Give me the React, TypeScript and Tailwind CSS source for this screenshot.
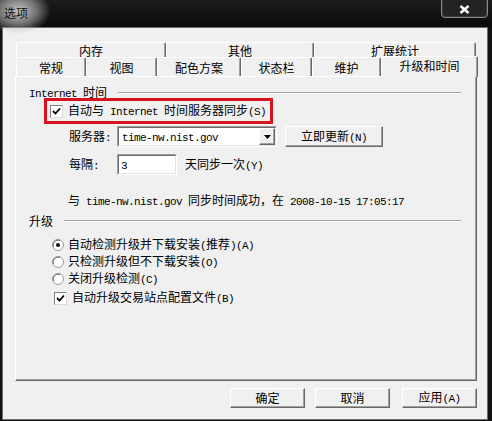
import React from 'react';

const cjk = "font-['Noto_Sans_CJK_SC',sans-serif]";

function M({ children }: { children: React.ReactNode }) {
  return <span className="font-['Liberation_Mono',monospace] text-[11px] tracking-[-0.6px] whitespace-pre">{children}</span>;
}

function CheckBox() {
  return (
    <div className="w-[13px] h-[13px] shrink-0 border border-t-[#808080] border-l-[#808080] border-r-[#dcdcdc] border-b-[#dcdcdc] bg-white flex items-center justify-center">
      <svg width="9" height="9" viewBox="0 0 9 9">
        <path d="M1 4 L3.5 6.5 L8 1.5" fill="none" stroke="#000" strokeWidth="1.8" />
      </svg>
    </div>
  );
}

function Radio({ checked }: { checked?: boolean }) {
  return (
    <svg width="12" height="12" viewBox="0 0 12 12" className="shrink-0">
      <circle cx="6" cy="6" r="5.5" fill="#fff" stroke="#9a9a9a" />
      <path d="M1.5 8 A5 5 0 0 1 8 1.5" fill="none" stroke="#6e6e6e" />
      {checked && <circle cx="6" cy="6" r="2" fill="#111" />}
    </svg>
  );
}

function Raised({ className, children }: { className: string; children: React.ReactNode }) {
  return (
    <div
      className={`flex items-center justify-center bg-[#f0f0f0] border border-t-white border-l-white border-r-[#696969] border-b-[#696969] shadow-[inset_-1px_-1px_0_#a0a0a0] ${className}`}
    >
      {children}
    </div>
  );
}

function Sunken({ className, children }: { className: string; children: React.ReactNode }) {
  return (
    <div className={`border border-t-[#a0a0a0] border-l-[#a0a0a0] border-r-white border-b-white ${className}`}>
      <div className="h-full flex items-center border border-t-[#696969] border-l-[#696969] border-r-[#e3e3e3] border-b-[#e3e3e3] bg-white">
        {children}
      </div>
    </div>
  );
}

function Tab({ w, children }: { w: string; children: React.ReactNode }) {
  return (
    <div
      className={`h-full flex justify-center pt-[1px] rounded-t-[2px] border-t border-l border-r border-t-white border-l-white border-r-[#696969] shadow-[inset_-1px_0_0_#a0a0a0] ${w}`}
    >
      {children}
    </div>
  );
}

function Group({ label }: { label: React.ReactNode }) {
  return (
    <div className="flex items-center h-[12px] pl-[13px] pr-[15px]">
      <span className="leading-[12px]">{label}</span>
      <div className="flex-1 ml-[11px] border-t border-b border-t-[#a0a0a0] border-b-white" />
    </div>
  );
}

export default function App() {
  return (
    <div className={`w-[492px] h-[421px] bg-[#111] overflow-hidden text-[12px] text-black ${cjk}`}>
      {/* title bar */}
      <div className="relative h-[27px] bg-gradient-to-b from-[#1c1c1c] to-[#0a0a0a]">
        <div className="absolute left-[-14px] top-[-12px] w-[64px] h-[46px] bg-[radial-gradient(ellipse_at_center,rgba(215,215,215,0.9)_0%,rgba(180,180,180,0.6)_40%,transparent_72%)]" />
        <span className="absolute left-[4px] top-[5px] text-[12px] leading-[16px] text-[#111]">选项</span>
        <div className="absolute left-[441px] top-[-3px] w-[47px] h-[21px] rounded-b-[4px] border border-[#8a8a8a] bg-[#232323] shadow-[inset_0_0_0_1px_#3a3a3a] flex items-center justify-center pt-[3px]">
          <svg width="11" height="9" viewBox="0 0 11 9">
            <path d="M1.5 1 L9.5 8 M9.5 1 L1.5 8" stroke="#fff" strokeWidth="2.4" />
          </svg>
        </div>
      </div>

      {/* client */}
      <div className="ml-[2px] w-[486px] h-[393px] border border-[#6d6d6d] bg-[#f0f0f0] flex flex-col">
        {/* tabs */}
        <div className="ml-[13px] mt-[14px] w-[462px] leading-[14px]">
          <div className="flex h-[15px]">
            <Tab w="w-[150px]">内存</Tab>
            <Tab w="w-[148px]">其他</Tab>
            <Tab w="w-[162px]">扩展统计</Tab>
          </div>
          <div className="flex h-[19px] items-end">
            <Tab w="w-[70px]"><span className="pt-[2px]">常规</span></Tab>
            <Tab w="w-[71px]"><span className="pt-[2px]">视图</span></Tab>
            <Tab w="w-[84px]"><span className="pt-[2px]">配色方案</span></Tab>
            <Tab w="w-[71px]"><span className="pt-[2px]">状态栏</span></Tab>
            <Tab w="w-[69px]"><span className="pt-[2px]">维护</span></Tab>
            <div className="relative z-10 -mb-[1px] h-[21px] w-[97px] flex justify-center pt-[2px] rounded-t-[2px] bg-[#f0f0f0] border-t border-l border-r border-t-white border-l-white border-r-[#696969] shadow-[inset_-1px_0_0_#a0a0a0]">
              升级和时间
            </div>
          </div>
        </div>

        {/* panel */}
        <div className="ml-[12px] w-[462px] h-[305px] border border-t-white border-l-white border-r-[#696969] border-b-[#696969] shadow-[inset_-1px_-1px_0_#a0a0a0] flex flex-col">
          <div className="mt-[10px]">
            <Group label={<><M>Internet </M>时间</>} />
          </div>

          <div className="mt-[-1px] ml-[28px] w-[229px] h-[26px] border-[3px] border-[#d7141d] flex items-center pl-[3px]">
            <CheckBox />
            <span className="ml-[5px] leading-[14px]">
              自动与<M> Internet </M>时间服务器同步<M>(S)</M>
            </span>
          </div>

          <div className="mt-[2px] ml-[53px] flex items-center h-[21px]">
            <span className="w-[48px]">服务器<M>:</M></span>
            <Sunken className="w-[160px] h-[21px]">
              <span className="flex-1 pl-[3px] leading-[14px]"><M>time-nw.nist.gov</M></span>
              <Raised className="w-[16px] h-[17px]">
                <svg width="7" height="4" viewBox="0 0 7 4"><path d="M0 0 H7 L3.5 4 Z" fill="#000" /></svg>
              </Raised>
            </Sunken>
            <Raised className="ml-[8px] w-[98px] h-[21px]">
              <span className="leading-[14px]">立即更新<M>(N)</M></span>
            </Raised>
          </div>

          <div className="mt-[7px] ml-[53px] flex items-center h-[21px]">
            <span className="w-[48px]">每隔<M>:</M></span>
            <Sunken className="w-[60px] h-[21px]">
              <span className="pl-[2px] leading-[14px]"><M>3</M></span>
            </Sunken>
            <span className="ml-[8px]">天同步一次<M>(Y)</M></span>
          </div>

          <div className="mt-[18px] ml-[52px] h-[14px] leading-[14px]">
            与<M> time-nw.nist.gov </M>同步时间成功，在<M> 2008-10-15 17:05:17</M>
          </div>

          <div className="mt-[8px]">
            <Group label="升级" />
          </div>

          <div className="mt-[9px] ml-[36px] flex flex-col">
            <div className="h-[17px] flex items-center">
              <Radio checked />
              <span className="ml-[4px]">自动检测升级并下载安装<M>(</M>推荐<M>)(A)</M></span>
            </div>
            <div className="h-[17px] flex items-center">
              <Radio />
              <span className="ml-[4px]">只检测升级但不下载安装<M>(O)</M></span>
            </div>
            <div className="h-[17px] flex items-center">
              <Radio />
              <span className="ml-[4px]">关闭升级检测<M>(C)</M></span>
            </div>
          </div>

          <div className="mt-[2px] ml-[38px] h-[18px] flex items-center">
            <CheckBox />
            <span className="ml-[5px]">自动升级交易站点配置文件<M>(B)</M></span>
          </div>
        </div>

        {/* buttons */}
        <div className="mt-[7px] w-[474px] flex justify-end">
          <Raised className="w-[75px] h-[20px]">确定</Raised>
          <Raised className="ml-[10px] w-[75px] h-[20px]">取消</Raised>
          <Raised className="ml-[12px] w-[75px] h-[20px]">
            <span>应用<M>(A)</M></span>
          </Raised>
        </div>
      </div>
    </div>
  );
}
